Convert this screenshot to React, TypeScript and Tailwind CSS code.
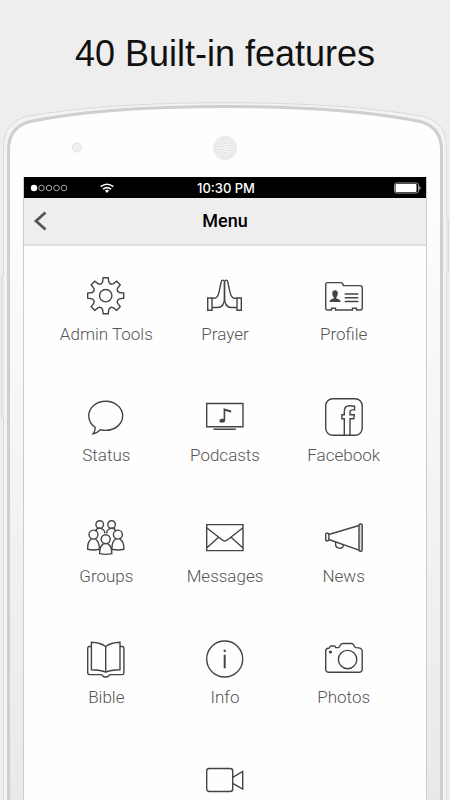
import React from 'react'

interface MenuItem {
  title: string
  icon: React.ReactNode
  hideLabel?: boolean
}

// Eight teeth, walked round the centre of a 38px box
function buildGearPath() {
  const point = (radius: number, degrees: number) => {
    const angle = ((degrees - 90) * Math.PI) / 180
    return `${(18.7 + radius * Math.cos(angle)).toFixed(2)} ${(18.7 + radius * Math.sin(angle)).toFixed(2)}`
  }
  let path = `M${point(18.2, -8)}`
  for (let i = 0; i < 8; i++) {
    const a = i * 45
    path += `L${point(18.2, a + 8)}L${point(14, a + 13)}Q${point(11.6, a + 22.5)} ${point(14, a + 32)}L${point(18.2, a + 37)}`
  }
  return path + 'Z'
}

const handPath =
  'M1.7 21H6v12.3H1.7zM6 21.3h2.5c3 0 3.8-3 4.7-7l2-9.4c.5-2.4 3.1-2.4 3.3.3v15.3c0 6-1.5 10-7 10H6'

const items: MenuItem[] = [
  {
    title: 'Admin Tools',
    icon: (
      <>
        <path d={buildGearPath()} />
        <circle cx="18.7" cy="18.7" r="6.2" />
      </>
    ),
  },
  {
    title: 'Prayer',
    icon: (
      <>
        <path d={handPath} />
        <path transform="translate(37 0) scale(-1 1)" d={handPath} />
      </>
    ),
  },
  {
    title: 'Profile',
    icon: (
      <>
        <path d="M2.7 5.6H16q2 0 2.3 3H35q2.3 0 2.3 2.2V31q0 2-2 2h-3.8v-1.8h-4V33h-17v-1.8h-4V33H2.7q-2 0-2-2V7.6q0-2 2-2z" />
        <path d="M19.7 17h13.6M19.7 20.8h13.6M19.7 24.5h13.6" />
        <path
          fill="#444"
          stroke="none"
          d="M10 13.3c2.2 0 3.1 1.5 2.8 3.6-.2 1.8-1 2.6-1.4 3.2v1.3c2.6.8 4.2 1.2 4.3 3.6H4.5c.1-2.4 1.6-2.8 4.2-3.6v-1.3c-.5-.6-1.2-1.4-1.4-3.2-.3-2.1.6-3.6 2.7-3.6z"
        />
      </>
    ),
  },
  {
    title: 'Status',
    icon: (
      <path d="M8.3 29.5c-.1 2.9-.9 4.8-2.2 6.2 3-.3 5.2-1.7 7.2-4.1 1.8.6 3.5.8 5.4.8 9.4 0 17-6.5 17-14.6S28.1 3.2 18.7 3.2s-17 6.5-17 14.6c0 4.7 2.5 9 6.6 11.7z" />
    ),
  },
  {
    title: 'Podcasts',
    icon: (
      <>
        <path d="M.7 5.5H37v23.2H.7zM7.5 31.3h22.3" />
        <path
          fill="#444"
          stroke="none"
          d="M17.6 10.2l7.6 2.3v2l-6-1.4v9.2c0 1.8-1.500 2.5-3.2 2.5-3.8 0-3.4-4 .1-4 .6 0 1 0 1.5.2z"
        />
      </>
    ),
  },
  {
    title: 'Facebook',
    icon: (
      <>
        <rect x=".7" y=".7" width="36.5" height="36.5" rx="7" />
        <path d="M19.3 37V20.7h-2.4v-4h2.4v-3.4c0-3.7 1.8-5.5 5.2-5.5q2.8 0 5.1.5v3.600h-2.3c-1.6 0-2.3.6-2.3 2v2.800h4.2l-.4 4H25V37" />
      </>
    ),
  },
  {
    title: 'Groups',
    icon: (
      <>
        <circle cx="12.7" cy="5.5" r="3.8" />
        <circle cx="24.6" cy="5.5" r="3.8" />
        <path d="M8.7 12.3c.5-4.200 8.500-4.300 9.200 2M28.700 12.300c-.5-4.200-8.500-4.300-9.200 2" />
        <circle cx="6.5" cy="15.6" r="4.5" />
        <circle cx="30.9" cy="15.6" r="4.5" />
        <path d="M4.3 20.3C1.2 21.7.5 25 .6 30.300q5.900 1.500 11.800 0c0-5.300-.7-8.600-3.800-10M28.700 20.300c-3.100 1.400-3.900 4.700-3.800 10q6 1.500 12 0c.1-5.300-.8-8.600-3.900-10" />
        <circle cx="18.7" cy="20.2" r="4.5" />
        <path d="M16.5 25c-3.1 1.4-4 4.7-3.9 9.6q6.1 1.6 12.2 0c.1-4.9-.8-8.2-3.9-9.6" />
      </>
    ),
  },
  {
    title: 'Messages',
    icon: (
      <path d="M.7 5.6H37v26H.7zM.7 8.8L16 20.8q2.8 2.3 5.6 0L37 8.8M.7 29l11.600-10.600M37 29L25.3 18.4" />
    ),
  },
  {
    title: 'News',
    icon: (
      <>
        <rect x=".7" y="14.3" width="3.2" height="7.4" rx="1" />
        <path d="M3.8 15.5l30.2-9M3.8 20.5L34 31.2M10.6 23v2.4q0 2.6 2.5 3.5 4.5 1.3 5.3-2.6" />
        <rect x="34" y="5" width="3.2" height="27.3" rx="1.3" fill="#ddd" />
      </>
    ),
  },
  {
    title: 'Bible',
    icon: (
      <>
        <path d="M4.4 6.5H2.4Q.7 6.5.7 8.2v24.6q0 1.8 1.7 1.8h11.400q1.200 0 1.800 1.100c1.300 1.700 4.900 1.700 6.200 0q.6-1.100 1.800-1.100h11.600q1.700 0 1.700-1.800V8.200q0-1.700-1.700-1.700h-2.200" />
        <path d="M18.7 6.5C15 3.7 10 2.5 4.4 2.3v27.4c5.6.1 10.6.5 14.3 2.5 3.7-2 8.7-2.4 14.3-2.5V2.3C27.4 2.5 22.4 3.7 18.7 6.5zv25.7" />
      </>
    ),
  },
  {
    title: 'Info',
    icon: (
      <>
        <circle cx="18.700" cy="19" r="18" />
        <path strokeWidth="2" d="M18.7 14.8v13.4M18.7 9.8v2.3" />
      </>
    ),
  },
  {
    title: 'Photos',
    icon: (
      <>
        <path d="M.7 11.5C.7 9 2 8 4.4 8q.3-2 1.6-2h3q1.3 0 1.6 1.6h3c1.3 0 1.4-4.1 4-4.1h9c2.7 0 2.6 4.1 4 4.1 4.5.2 6.6.8 6.6 3.9v17.400q0 3.400-3.400 3.400H4q-3.300 0-3.300-3.400z" />
        <circle cx="22.6" cy="19.6" r="9.2" />
        <circle cx="5.400" cy="12" r="1.6" fill="#444" stroke="none" />
      </>
    ),
  },
  {
    title: 'Videos',
    hideLabel: true,
    icon: (
      <>
        <rect x=".7" y="7.5" width="26" height="23" rx="2.5" />
        <path d="M26.7 16.3l10-5.8v17.6l-10-5.8" />
      </>
    ),
  },
]

const speakerRings = [
  { radius: 2.5, count: 5 },
  { radius: 5, count: 11 },
  { radius: 7.5, count: 17 },
  { radius: 9.5, count: 22 },
]

function PhoneTop() {
  return (
    <svg className="block w-full" viewBox="0 0 450 77" fill="none" aria-hidden="true">
      <defs>
        <clipPath id="phone-top">
          <rect width="450" height="77" />
        </clipPath>
      </defs>
      <g clipPath="url(#phone-top)">
        <path
          fill="#f3f3f3"
          stroke="#dadada"
          d="M3.5 80V47C3.5 31 11 20.5 27 16.5 80 6.5 155 2.7 225 2.7S370 6.5 423 16.5C439 20.5 446.5 31 446.5 47V80"
        />
        <path
          fill="#fefefe"
          stroke="#cfcfcf"
          strokeWidth="3"
          d="M8.5 80V50C8.5 35 15 25.5 30 21.5 84 10.5 155 6.5 225 6.5S366 10.5 420 21.5C435 25.5 441.5 35 441.5 50V80"
        />
      </g>
      <circle cx="77" cy="47.5" r="4.5" fill="#f1f1f1" stroke="#e2e2e2" />
      <circle cx="225" cy="48" r="11.5" fill="#f3f3f3" stroke="#e4e4e4" />
      {speakerRings.map(({ radius, count }) =>
        Array.from({ length: count }, (_, i) => {
          const angle = (i / count) * Math.PI * 2
          return (
            <circle
              key={`${radius}-${i}`}
              cx={225 + radius * Math.cos(angle)}
              cy={48 + radius * Math.sin(angle)}
              r=".6"
              fill="#ccc"
            />
          )
        })
      )}
    </svg>
  )
}

function StatusBar() {
  return (
    <div className="grid h-[21px] grid-cols-3 items-center bg-black pr-1 pl-[6px] text-white">
      <div className="flex items-center gap-8">
        <svg width="38" height="8" viewBox="0 0 38 8" fill="none" stroke="#ccc" strokeWidth=".8" aria-hidden="true">
          <circle cx="4" cy="4" r="3.2" fill="#fff" stroke="none" />
          <circle cx="11.5" cy="4" r="2.8" />
          <circle cx="19" cy="4" r="2.8" />
          <circle cx="26.5" cy="4" r="2.8" />
          <circle cx="34" cy="4" r="2.8" />
        </svg>
        <svg width="14" height="10" viewBox="0 0 14 10" fill="none" stroke="#fff" strokeWidth="1.6" aria-hidden="true">
          <path d="M.7 3.7q6.3-5 12.6 0M3 6.2q4-3.2 8 0" />
          <path fill="#fff" stroke="none" d="M4.8 7.6q2.2-1.7 4.4 0L7 9.9z" />
        </svg>
      </div>
      <div className="text-center font-['Inter',sans-serif] text-[13px] leading-5 font-medium whitespace-nowrap">
        10:30 PM
      </div>
      <svg className="justify-self-end" width="28" height="12" viewBox="0 0 28 12" fill="none" aria-hidden="true">
        <rect x=".5" y="1" width="24" height="10" rx="2" stroke="#999" />
        <rect x="1.5" y="2" width="21" height="8" rx="1" fill="#fff" />
        <path d="M25.5 4q2 2 0 4z" fill="#fff" />
      </svg>
    </div>
  )
}

function Header() {
  return (
    <header className="grid h-12 grid-cols-3 items-center border-b-2 border-[#ddd] bg-[#eee]">
      <button type="button" aria-label="Back" className="flex h-8 w-8 items-center justify-center">
        <svg width="14" height="20" viewBox="0 0 14 20" fill="none" stroke="#555" strokeWidth="2.8" aria-hidden="true">
          <path d="M12.5 1.5L3 10l9.5 8.5" />
        </svg>
      </button>
      <h2 className="text-center font-['Roboto',sans-serif] text-[18px] leading-6 font-medium text-black">Menu</h2>
    </header>
  )
}

function MenuButton({ item }: { item: MenuItem }) {
  return (
    <button type="button" aria-label={item.title} className="flex flex-col items-center gap-[7px]">
      <svg width="38" height="38" viewBox="0 0 38 38" fill="none" stroke="#444" strokeWidth="1.4" aria-hidden="true">
        {item.icon}
      </svg>
      {!item.hideLabel && <span className="leading-6 whitespace-nowrap">{item.title}</span>}
    </button>
  )
}

function App() {
  return (
    <main className="flex h-screen flex-col overflow-hidden bg-[#eee]">
      <h1 className="pt-8 pb-6 text-center font-['Liberation_Sans',Arial,sans-serif] text-[36px] leading-[44px] text-[#111]">
        40 Built-in features
      </h1>
      <PhoneTop />
      <div className="relative flex grow px-[3px]">
        {/* volume and power keys */}
        <div className="absolute top-[98px] left-[1px] h-[144px] w-[3px] rounded-l-sm border border-r-0 border-[#ddd] bg-[#e8e8e8]" />
        <div className="absolute top-[40px] right-[1px] h-[58px] w-[3px] rounded-r-sm border border-l-0 border-[#ddd] bg-[#e8e8e8]" />
        <div className="flex grow border-x border-[#dadada] bg-[#f3f3f3] px-[3px]">
          <div className="flex grow border-x-[3px] border-[#cfcfcf] bg-linear-to-b from-[#fefefe] to-[#e9e9e9] px-[13px]">
            <section className="grow border-x border-[#ccc] bg-[#fefefe]">
              <StatusBar />
              <Header />
              <nav className="grid grid-cols-3 gap-y-[52px] px-[23px] pt-[31px] font-['Roboto',sans-serif] text-[17px] font-light text-[#555]">
                {items.slice(0, 12).map((item) => (
                  <MenuButton item={item} key={item.title} />
                ))}
                <div className="col-start-2 grid">
                  <MenuButton item={items[12]} />
                </div>
              </nav>
            </section>
          </div>
        </div>
      </div>
    </main>
  )
}

export default App
